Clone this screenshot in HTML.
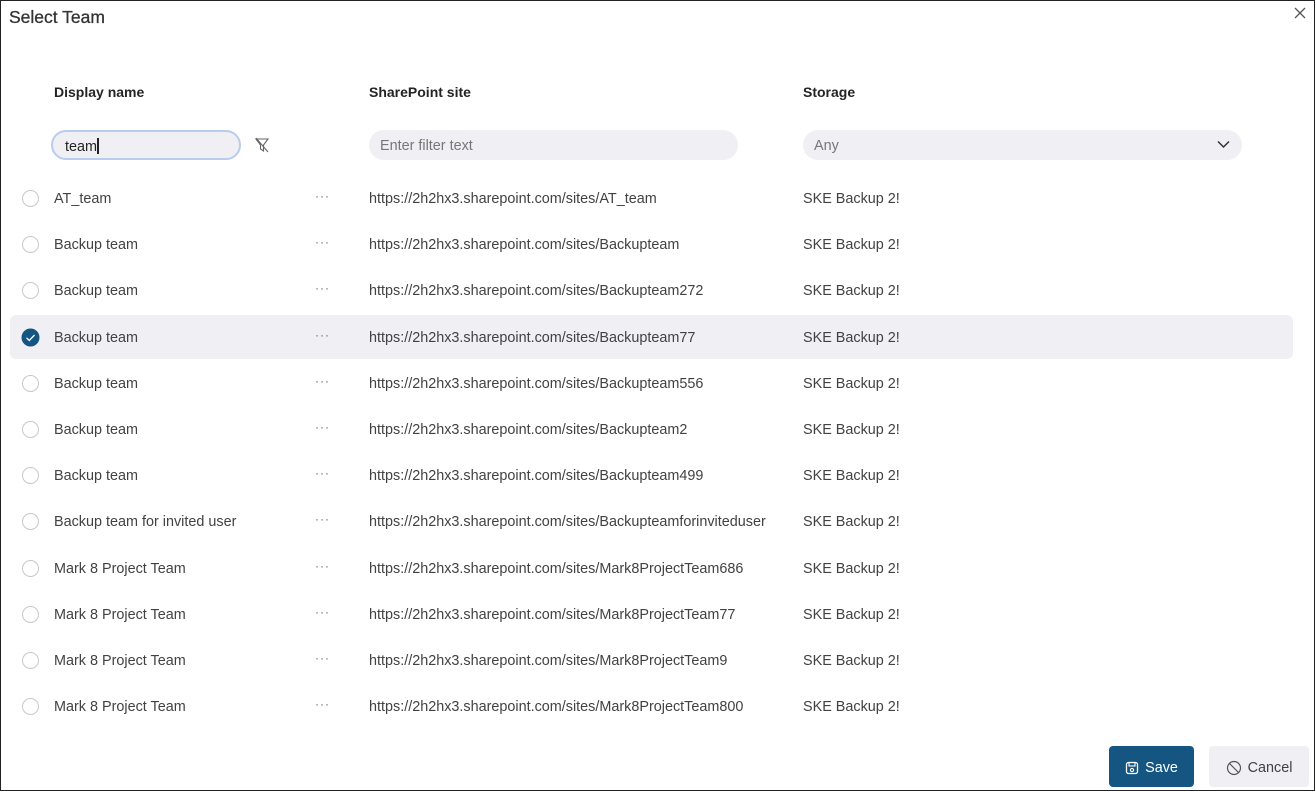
<!DOCTYPE html>
<html><head><style>
*{box-sizing:border-box;margin:0;padding:0}
body{width:1315px;height:791px;background:#fff;font-family:"Liberation Sans",sans-serif;color:#424242;position:relative;overflow:hidden}
.frame{position:absolute;left:0;top:0;width:1315px;height:791px;border:1px solid #222}
.title{position:absolute;left:9px;top:7px;font-size:17.5px;color:#333;-webkit-text-stroke:0.3px #333}
.close{position:absolute;left:1293px;top:6px;font-size:16px;color:#555}
.h{position:absolute;top:84px;font-size:14px;font-weight:bold;color:#242424}
.inp{position:absolute;top:130px;height:30px;border-radius:15px;background:#f0eff4;font-size:14.4px;padding:8px 11px;color:#777}
.row{position:absolute;left:10px;width:1283px;height:44px;font-size:14.4px;color:#424242}
.row.sel{background:#f0eff4;border-radius:6px}
.row span{position:absolute;top:15px;white-space:nowrap}
.rad{position:absolute;left:12px;top:14px;width:17px;height:17px;border:1.5px solid #c8c8c8;border-radius:50%}
.dots{color:#666;font-size:12px;top:13px!important;letter-spacing:1px}
.btn{position:absolute;top:746px;height:41px;border-radius:4px;font-size:14.4px;display:flex;align-items:center;justify-content:center;gap:6px;padding-top:2px}
</style></head><body>
<div class="frame"></div>
<div class="title">Select Team</div>
<div class="close"><svg width="14" height="14" viewBox="0 0 14 14"><path d="M2 2L12 12M12 2L2 12" stroke="#555" stroke-width="1.3"/></svg></div>
<div class="h" style="left:54px">Display name</div>
<div class="h" style="left:369px">SharePoint site</div>
<div class="h" style="left:803px">Storage</div>
<div class="inp" style="left:51px;width:190px;border:2px solid #b8ccf0;padding:6px 12px;color:#242424">team<span style="display:inline-block;width:2px;height:16px;background:#222;vertical-align:-3px"></span></div>
<svg style="position:absolute;left:254px;top:137px" width="16" height="16" viewBox="0 0 16 16"><path d="M2 2H14L9.5 8V14L6.5 12V8Z" fill="none" stroke="#666" stroke-width="1.1"/><path d="M2 1L14 15" stroke="#666" stroke-width="1.1"/></svg>
<div class="inp" style="left:369px;width:369px">Enter filter text</div>
<div class="inp" style="left:803px;width:439px">Any<svg style="position:absolute;right:12px;top:10px" width="13" height="9" viewBox="0 0 13 9"><path d="M1 1.5L6.5 7L12 1.5" fill="none" stroke="#333" stroke-width="1.5"/></svg></div>
<div id="rows"></div>
<div class="btn" style="left:1109px;width:85px;background:#155582;color:#fff"><svg width="14" height="14" viewBox="0 0 14 14"><rect x="1.5" y="1.5" width="11" height="11" rx="2" fill="none" stroke="#fff" stroke-width="1.3"/><rect x="4" y="1.5" width="6" height="3.5" fill="none" stroke="#fff" stroke-width="1.1"/><circle cx="7" cy="9" r="1.6" fill="none" stroke="#fff" stroke-width="1.1"/></svg>Save</div>
<div class="btn" style="left:1209px;width:100px;background:#f0eff4;color:#424242"><svg width="16" height="16" viewBox="0 0 16 16"><circle cx="8" cy="8" r="6.5" fill="none" stroke="#555" stroke-width="1.2"/><path d="M3.5 3.5L12.5 12.5" stroke="#555" stroke-width="1.2"/></svg>Cancel</div>
<script>
var d=[["AT_team","AT_team"],["Backup team","Backupteam"],["Backup team","Backupteam272"],["Backup team","Backupteam77"],["Backup team","Backupteam556"],["Backup team","Backupteam2"],["Backup team","Backupteam499"],["Backup team for invited user","Backupteamforinviteduser"],["Mark 8 Project Team","Mark8ProjectTeam686"],["Mark 8 Project Team","Mark8ProjectTeam77"],["Mark 8 Project Team","Mark8ProjectTeam9"],["Mark 8 Project Team","Mark8ProjectTeam800"]];
var h="";
d.forEach(function(r,i){var top=Math.round(176+i*46.2);var s=i==3;
h+='<div class="row'+(s?' sel':'')+'" style="top:'+top+'px">'+
(s?'<svg style="position:absolute;left:11px;top:13px" width="19" height="19" viewBox="0 0 19 19"><circle cx="9.5" cy="9.5" r="9" fill="#155582"/><path d="M5.5 9.8L8.3 12.5L13.5 7" fill="none" stroke="#fff" stroke-width="1.3"/></svg>':'<div class="rad"></div>')+
'<span style="left:44px">'+r[0]+'</span><span class="dots" style="left:305px">···</span><span style="left:359px">https://2h2hx3.sharepoint.com/sites/'+r[1]+'</span><span style="left:793px">SKE Backup 2!</span></div>';});
document.getElementById("rows").innerHTML=h;
</script>
</body></html>
